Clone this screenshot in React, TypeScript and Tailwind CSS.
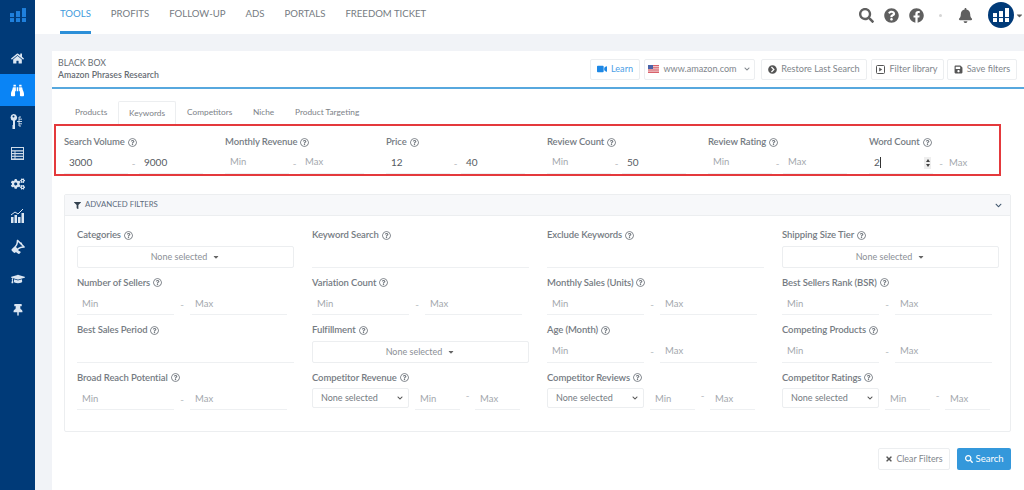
import React from "react";
import {
  FaHome, FaBinoculars, FaSearch, FaQuestionCircle, FaFacebook, FaBell, FaVideo,
  FaChevronCircleRight, FaSave, FaFilter, FaTimes, FaGraduationCap, FaThumbtack,
  FaCogs, FaBullhorn, FaChevronDown, FaCaretDown, FaRegQuestionCircle,
} from "react-icons/fa";

function Logo({ size, color }: { size: number; color: string }) {
  return (
    <svg width={size} height={size * 0.88} viewBox="0 0 16 14" fill={color}>
      <rect x="0" y="5" width="4" height="4" />
      <rect x="0" y="10" width="4" height="4" />
      <rect x="6" y="3" width="4" height="6" />
      <rect x="6" y="10" width="4" height="4" />
      <rect x="12" y="0" width="4" height="9" />
      <rect x="12" y="10" width="4" height="4" />
    </svg>
  );
}

function KeyTree() {
  return (
    <svg width="15" height="15" viewBox="0 0 15 15" fill="none">
      <path fillRule="evenodd" fill="#dbe6f2" d="M3.5 0a3.5 3.5 0 0 1 1.5 6.7V15H3l-1-1 1-1-1-1 1-1V6.8A3.5 3.5 0 0 1 3.5 0zm0 1.6a1 1 0 1 0 0 2 1 1 0 0 0 0-2z" />
      <path stroke="#dbe6f2" strokeWidth="0.9" d="M7 7.5h2M9 3v9M9 3h2M9 5.2h3M9 7.5h3M9 9.8h3M9 12h2" />
    </svg>
  );
}

function ListPanel() {
  return (
    <svg width="13" height="13" viewBox="0 0 13 13">
      <rect width="13" height="13" fill="#cfdbe8" />
      <rect x="1" y="1" width="11" height="2.2" fill="#003a78" />
      <rect x="1" y="4.5" width="2.5" height="1.5" fill="#003a78" />
      <rect x="4.5" y="4.5" width="7.5" height="1.5" fill="#003a78" />
      <rect x="1" y="7.2" width="2.5" height="1.5" fill="#003a78" />
      <rect x="4.5" y="7.2" width="7.5" height="1.5" fill="#003a78" />
      <rect x="1" y="9.9" width="2.5" height="1.5" fill="#003a78" />
      <rect x="4.5" y="9.9" width="7.5" height="1.5" fill="#003a78" />
    </svg>
  );
}

function Chart() {
  return (
    <svg width="13" height="14" viewBox="0 0 13 14" fill="#dbe6f2">
      <rect x="0" y="8" width="2.5" height="6" />
      <rect x="3.5" y="6" width="2.5" height="8" />
      <rect x="7" y="8" width="2.5" height="6" />
      <rect x="10.5" y="4" width="2.5" height="10" />
      <path d="M0 6 L4 3 L7 5 L12 0" stroke="#dbe6f2" strokeWidth="1" fill="none" />
    </svg>
  );
}

function Flag() {
  return (
    <svg width="11" height="8" viewBox="0 0 11 8">
      <rect width="11" height="8" fill="#d9616b" />
      <rect y="1.2" width="11" height="1" fill="#f3dfe0" />
      <rect y="3.4" width="11" height="1" fill="#f3dfe0" />
      <rect y="5.6" width="11" height="1" fill="#f3dfe0" />
      <rect width="5" height="4" fill="#4a63a8" />
    </svg>
  );
}

function SquarePlay() {
  return (
    <svg width="9" height="9" viewBox="0 0 9 9" fill="none">
      <rect x="0.5" y="0.5" width="8" height="8" rx="1" stroke="#555" />
      <path d="M3.2 2.5 L6.2 4.5 L3.2 6.5 Z" fill="#555" />
    </svg>
  );
}

function Label({ text }: { text: string }) {
  return (
    <div className="h-4 flex items-center gap-[3px] text-[9.5px] tracking-[-0.1px] font-semibold text-[#757b82] whitespace-nowrap">
      {text}
      <FaRegQuestionCircle className="text-[9px] text-[#757b82]" />
    </div>
  );
}

function Field({ text, width, value }: { text?: string; width: string; value?: boolean }) {
  return (
    <div className={`${width} h-[22px] border-b border-[#eef0f2] flex items-center pl-[5px] ${value ? "text-[10px] text-[#555b62]" : "text-[9.5px] text-[#a3a8ad]"}`}>
      {text}
    </div>
  );
}

function Dash({ width }: { width: string }) {
  return <div className={`${width} text-center text-[10px] text-[#b5b9bd]`}>-</div>;
}

function Range({ min = "Min", max = "Max", value }: { min?: string; max?: string; value?: boolean }) {
  return (
    <div className="flex items-center">
      <Field text={min} width="w-[97px]" value={value} />
      <Dash width="w-[16px]" />
      <Field text={max} width="w-[97px]" value={value} />
    </div>
  );
}

function TopField({ label, min = "Min", max = "Max", minV, maxV }: { label: string; min?: string; max?: string; minV?: boolean; maxV?: boolean }) {
  return (
    <div className="flex flex-col gap-[2px]">
      <Label text={label} />
      <div className="flex items-center">
        <Field text={min} width="w-[64px]" value={minV} />
        <Dash width="w-[11px]" />
        <Field text={max} width="w-[64px]" value={maxV} />
      </div>
    </div>
  );
}

function DropButton() {
  return (
    <div className="w-[217px] h-[22px] border border-[#eceef0] rounded-[2px] flex items-center justify-center gap-[5px] text-[9px] text-[#8b9096]">
      None selected
      <FaCaretDown className="text-[8px] text-[#666]" />
    </div>
  );
}

function Combo() {
  return (
    <div className="flex items-start">
      <div className="w-[97px] h-[20px] border border-[#eceef0] rounded-[2px] flex items-center justify-between pl-2 pr-[5px] text-[9px] text-[#757b82]">
        None selected
        <FaChevronDown className="text-[6px] text-[#555]" />
      </div>
      <div className="w-[6px]" />
      <Field text="Min" width="w-[45px]" />
      <Dash width="w-[15px]" />
      <Field text="Max" width="w-[45px]" />
    </div>
  );
}

function Cell({ label, children }: { label: string; children: React.ReactNode }) {
  return (
    <div className="flex flex-col gap-[2.5px] h-[47.4px]">
      <Label text={label} />
      {children}
    </div>
  );
}

function HeadBtn({ children, width }: { children: React.ReactNode; width: string }) {
  return (
    <div className={`${width} h-[21px] shrink-0 border border-[#eceef0] rounded-[2px] flex items-center justify-center gap-[4px] text-[9.1px] text-[#81868c] whitespace-nowrap`}>
      {children}
    </div>
  );
}

const sideIcons = [
  <KeyTree />,
  <ListPanel />,
  <FaCogs className="text-[14px]" />,
  <Chart />,
  <FaBullhorn className="text-[13px] -rotate-45" />,
  <FaGraduationCap className="text-[14px]" />,
  <FaThumbtack className="text-[12px]" />,
];

export default function App() {
  return (
    <div className="w-[1024px] h-[490px] overflow-hidden flex bg-[#f1f3f7] font-['Lato','Noto_Sans',sans-serif]">
      <aside className="w-[35px] shrink-0 bg-[#003a78] flex flex-col items-center">
        <div className="h-[42px] w-full flex items-start justify-center pt-[8px]">
          <Logo size={16} color="#1f80dc" />
        </div>
        <div className="h-[32px] w-full flex items-center justify-center text-[13px] text-[#dbe6f2]">
          <FaHome />
        </div>
        <div className="h-[32px] w-full flex items-center justify-center text-[13px] text-white bg-[#0a84f5]">
          <FaBinoculars />
        </div>
        {sideIcons.map((icon, i) => (
          <div key={i} className="h-[31.4px] w-full flex items-center justify-center text-[#dbe6f2]">
            {icon}
          </div>
        ))}
      </aside>

      <div className="flex-1 flex flex-col min-w-0">
        <header className="h-[34px] shrink-0 bg-white flex items-start pl-[25px] relative">
          <nav className="flex gap-[20px] text-[9.6px] text-[#757b82] whitespace-nowrap">
            <div className="h-[34px] pt-[7px] text-[#3f9bdc] border-b-[3px] border-[#2c8fd8]">TOOLS</div>
            <div className="pt-[7px]">PROFITS</div>
            <div className="pt-[7px]">FOLLOW-UP</div>
            <div className="pt-[7px]">ADS</div>
            <div className="pt-[7px]">PORTALS</div>
            <div className="pt-[7px]">FREEDOM TICKET</div>
          </nav>
          <div className="ml-auto flex items-center h-[30px] text-[#5f5f5f]">
            <FaSearch className="text-[15px]" />
            <FaQuestionCircle className="text-[15px] ml-[10px]" />
            <FaFacebook className="text-[15px] ml-[10px]" />
            <span className="w-[3px] h-[3px] rounded-full bg-[#d5d5d5] ml-[15px]" />
            <FaBell className="text-[15px] ml-[16px]" />
            <div className="w-[26px] h-[26px] rounded-full bg-[#003a78] ml-[15px] flex items-center justify-center">
              <Logo size={16} color="#ffffff" />
            </div>
            <FaCaretDown className="text-[9px] ml-[1px]" />
          </div>
        </header>

        <main className="flex-1 ml-[17px] mt-[17px] bg-white flex flex-col min-h-0">
          <div className="h-[38px] shrink-0 border-b-2 border-[#57a8de] flex items-center pl-[6px] pr-[7px]">
            <div className="text-[8.75px] leading-[12.5px] text-[#666b72]">
              <div>BLACK BOX</div>
              <div className="font-semibold">Amazon Phrases Research</div>
            </div>
            <div className="ml-auto flex gap-[3.5px]">
              <HeadBtn width="w-[50px]">
                <FaVideo className="text-[10px] text-[#1e88e5]" />
                <span className="text-[#4da0e6]">Learn</span>
              </HeadBtn>
              <HeadBtn width="w-[111px] mr-[3px]">
                <Flag />
                <span>www.amazon.com</span>
                <FaChevronDown className="text-[6px] ml-[3px]" />
              </HeadBtn>
              <HeadBtn width="w-[106px]">
                <FaChevronCircleRight className="text-[9px] text-[#555]" />
                Restore Last Search
              </HeadBtn>
              <HeadBtn width="w-[73px]">
                <SquarePlay />
                Filter library
              </HeadBtn>
              <HeadBtn width="w-[70px]">
                <FaSave className="text-[9px] text-[#555]" />
                Save filters
              </HeadBtn>
            </div>
          </div>

          <div className="h-[35px] shrink-0 flex items-end pl-[13px] text-[8.3px] text-[#7d8288]">
            <div className="h-[23px] w-[53px] pl-[10px] flex items-center">Products</div>
            <div className="h-[23px] w-[58px] justify-center flex items-center border border-b-0 border-[#eceef0] rounded-t-[2px]">Keywords</div>
            <div className="h-[23px] w-[77px] pl-[11px] flex items-center">Competitors</div>
            <div className="h-[23px] w-[42px] flex items-center">Niche</div>
            <div className="h-[23px] flex items-center whitespace-nowrap">Product Targeting</div>
          </div>

          <section className="w-[947px] ml-[2px] h-[52px] shrink-0 border-2 border-[#e4393c] grid grid-cols-[161px_161px_161px_161px_161px_161px] pl-[8px] pt-[8px]">
            <TopField label="Search Volume" min="3000" max="9000" minV maxV />
            <TopField label="Monthly Revenue" />
            <TopField label="Price" min="12" max="40" minV maxV />
            <TopField label="Review Count" max="50" maxV />
            <TopField label="Review Rating" />
            <div className="flex flex-col gap-[2px]">
              <Label text="Word Count" />
              <div className="flex items-center">
                <div className="w-[64px] h-[22px] border-b border-[#eef0f2] flex items-center pl-[5px] text-[10px] text-[#555b62] relative">
                  2<span className="w-px h-[11px] bg-[#333]" />
                  <div className="absolute right-[2px] top-[5px] w-[7px] h-[12px] bg-[#eeeeee] flex flex-col items-center justify-center gap-[2px]">
                    <span className="border-x-[2px] border-x-transparent border-b-[3px] border-b-[#444]" />
                    <span className="border-x-[2px] border-x-transparent border-t-[3px] border-t-[#444]" />
                  </div>
                </div>
                <Dash width="w-[16px]" />
                <div className="text-[9.5px] text-[#a3a8ad]">Max</div>
              </div>
            </div>
          </section>

          <section className="w-[947px] ml-[12px] mt-[18px] h-[238px] shrink-0 border border-[#eceef0] rounded-[2px] flex flex-col">
            <div className="h-[21px] shrink-0 bg-[#f7f8fa] border-b border-[#eceef0] flex items-center pl-[9px] pr-[8px] text-[7.8px] text-[#5d6b7c]">
              <FaFilter className="text-[7px] text-[#33414f] mr-[4px]" />
              ADVANCED FILTERS
              <FaChevronDown className="ml-auto text-[7px] text-[#40566e]" />
            </div>
            <div className="grid grid-cols-[235px_235px_235px_235px] pl-[12px] pt-[11.5px]">
              <Cell label="Categories"><DropButton /></Cell>
              <Cell label="Keyword Search"><Field width="w-[217px]" /></Cell>
              <Cell label="Exclude Keywords"><Field width="w-[217px]" /></Cell>
              <Cell label="Shipping Size Tier"><DropButton /></Cell>

              <Cell label="Number of Sellers"><Range /></Cell>
              <Cell label="Variation Count"><Range /></Cell>
              <Cell label="Monthly Sales (Units)"><Range /></Cell>
              <Cell label="Best Sellers Rank (BSR)"><Range /></Cell>

              <Cell label="Best Sales Period"><Field width="w-[217px]" /></Cell>
              <Cell label="Fulfillment"><DropButton /></Cell>
              <Cell label="Age (Month)"><Range /></Cell>
              <Cell label="Competing Products"><Range /></Cell>

              <Cell label="Broad Reach Potential"><Range /></Cell>
              <Cell label="Competitor Revenue"><Combo /></Cell>
              <Cell label="Competitor Reviews"><Combo /></Cell>
              <Cell label="Competitor Ratings"><Combo /></Cell>
            </div>
          </section>

          <div className="flex justify-end gap-[7px] pr-[13px] mt-[16px]">
            <div className="w-[72px] h-[22px] border border-[#eceef0] rounded-[2px] flex items-center justify-center gap-[3px] text-[8.8px] text-[#81868c]">
              <FaTimes className="text-[8px] text-[#555]" />
              Clear Filters
            </div>
            <div className="w-[54px] h-[22px] bg-[#3498db] rounded-[2px] flex items-center justify-center gap-[3px] text-[9.5px] text-white">
              <FaSearch className="text-[8px]" />
              Search
            </div>
          </div>
        </main>
      </div>
    </div>
  );
}
